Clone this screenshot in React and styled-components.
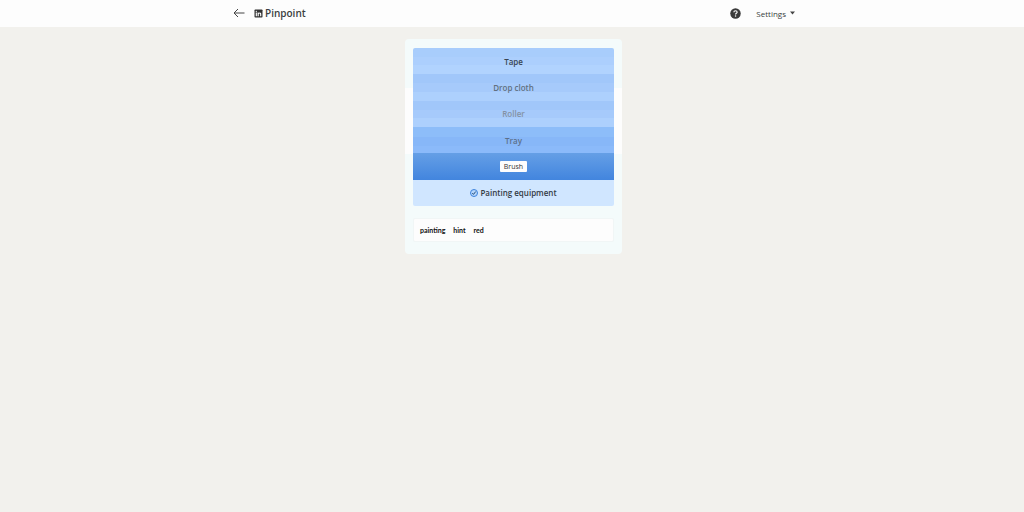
import React from 'react'
import styled, { createGlobalStyle } from 'styled-components'

const GlobalStyle = createGlobalStyle`
  * {
    box-sizing: border-box;
  }

  body {
    margin: 0;
    background-color: #f2f1ed;
    color: #3a3d40;
    font-family: 'Open Sans', 'Noto Sans', sans-serif;
    font-size: 8px;
  }

  button {
    font: inherit;
    color: inherit;
    background: none;
    border: 0;
    padding: 0;
    cursor: pointer;
  }

  svg {
    display: block;
  }
`

const Header = styled.header`
  padding: 0 0 1px 4px;
  background-color: #fdfdfd;
`

const Nav = styled.nav`
  display: flex;
  align-items: center;
  max-width: 562px;
  height: 26px;
  margin: 0 auto;
`

const Back = styled.button`
  margin-right: 9px;
`

const Title = styled.h1`
  display: flex;
  align-items: center;
  gap: 2px;
  margin: 0 auto 0 0;
  font-size: 10px;
  font-weight: 600;
  line-height: 14px;
`

const Settings = styled.button`
  display: flex;
  align-items: center;
  gap: 4px;
  margin-left: 15px;
`

const Page = styled.main`
  padding: 12px 0 12px 3px;
`

const Game = styled.section`
  max-width: 217px;
  margin: 0 auto;
  padding: 9px 8px 12px;
  border-radius: 4px;
  background: linear-gradient(
    #f4fbfb 49px,
    #fdfdfd 49px,
    #fdfdfd 115px,
    #f4fbfb 115px
  );
`

const Clues = styled.ol`
  display: grid;
  grid-auto-rows: 1fr;
  height: 158px;
  margin: 0;
  padding: 0;
  list-style: none;
  border-radius: 2px;
  overflow: hidden;
`

const Clue = styled.li`
  display: flex;
  align-items: center;
  justify-content: center;
  gap: 2px;
  font-weight: 600;
  color: ${props => props.$color};
  background: ${props => props.$background};
`

const Tag = styled.span`
  padding: 0 4px;
  line-height: 11px;
  font-size: 7px;
  font-weight: 400;
  color: #333;
  background-color: #fdfdfd;
  border-radius: 1px;
`

const Guesses = styled.div`
  display: flex;
  align-items: center;
  gap: 8px;
  height: 24px;
  margin-top: 12px;
  padding: 0 6px;
  font-family: Lato, sans-serif;
  font-size: 7px;
  font-weight: 700;
  color: #111;
  background-color: #fdfdfd;
  border: 1px solid #f1f6f6;
  border-radius: 2px;
`

const light = 'linear-gradient(#a8cdfc 33%, #accffd 33% 66%, #b1d3fe 66%)'
const shaded = 'linear-gradient(#a1c7fa 33%, #a6cafb 33% 66%, #add0fd 66%)'

const clues = [
  { text: 'Tape', color: '#3a4552', background: light },
  { text: 'Drop cloth', color: '#61707f', background: shaded },
  { text: 'Roller', color: '#8492a3', background: shaded },
  {
    text: 'Tray',
    color: '#5d708a',
    background: 'linear-gradient(#8dbdf9 40%, #87b7f8 40% 75%, #8bbafa 75%)',
  },
]

const ArrowIcon = () => (
  <svg width="12" height="10" viewBox="0 0 12 10" fill="none" stroke="#444">
    <path d="M11.5 5H1M5 1L1 5l4 4" />
  </svg>
)

const LinkedInIcon = () => (
  <svg width="9" height="9" viewBox="0 0 18 18" fill="#fdfdfd">
    <rect x="1" y="1" width="16" height="16" rx="1.5" fill="#333" />
    <path d="M3.5 7h2.3v7.5H3.5zM7.2 7h2.2v1c.5-.8 1.3-1.2 2.3-1.2 2.2 0 2.8 1.4 2.8 3.5v4.2h-2.3v-3.8c0-1.1-.2-1.9-1.2-1.9s-1.5.8-1.5 1.9v3.8H7.2z" />
    <circle cx="4.65" cy="4.6" r="1.35" />
  </svg>
)

const HelpIcon = () => (
  <svg width="11" height="11" viewBox="0 0 22 22" fill="none">
    <circle cx="11" cy="11" r="10.5" fill="#3a3a3a" />
    <path
      d="M7.7 8.7c0-2 1.3-3.2 3.3-3.2s3.3 1.2 3.3 2.9c0 2.2-3.2 2.3-3.2 4.7"
      stroke="#fdfdfd"
      strokeWidth="2.3"
    />
    <circle cx="11.1" cy="16.1" r="1.5" fill="#fdfdfd" />
  </svg>
)

const CaretIcon = () => (
  <svg width="5" height="4" viewBox="0 0 5 4" fill="#444">
    <path d="M0 .5h5L2.5 3.5z" />
  </svg>
)

const CheckIcon = () => (
  <svg width="8" height="8" viewBox="0 0 16 16" fill="none">
    <circle cx="8" cy="8" r="7" fill="#b5d6fc" stroke="#3d82dc" strokeWidth="2" />
    <path d="M4.5 8l2.5 2.8L11.5 5" stroke="#25507f" strokeWidth="2" />
  </svg>
)

export default () => (
  <>
    <GlobalStyle />
    <Header>
      <Nav>
        <Back aria-label="Back">
          <ArrowIcon />
        </Back>
        <Title>
          <LinkedInIcon />
          Pinpoint
        </Title>
        <button aria-label="Help">
          <HelpIcon />
        </button>
        <Settings>
          Settings
          <CaretIcon />
        </Settings>
      </Nav>
    </Header>
    <Page>
      <Game>
        <Clues>
          {clues.map(({ text, color, background }) => (
            <Clue key={text} $color={color} $background={background}>
              {text}
            </Clue>
          ))}
          <Clue $background="linear-gradient(#659fe6, #4285de)">
            <Tag>Brush</Tag>
          </Clue>
          <Clue $color="#333b45" $background="#d0e6ff">
            <CheckIcon />
            Painting equipment
          </Clue>
        </Clues>
        <Guesses>
          <span>painting</span>
          <span>hint</span>
          <span>red</span>
        </Guesses>
      </Game>
    </Page>
  </>
)
